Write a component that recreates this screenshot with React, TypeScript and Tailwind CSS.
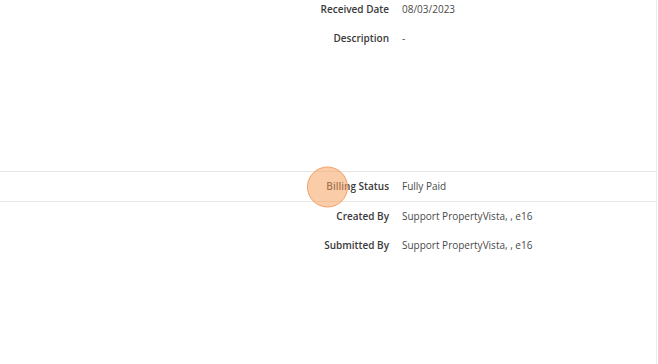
import React from 'react';

type Row = { label: string; value: string };

const top: Row[] = [
  { label: 'Received Date', value: '08/03/2023' },
  { label: 'Description', value: '-' },
];

const bottom: Row[] = [
  { label: 'Created By', value: 'Support PropertyVista, , e16' },
  { label: 'Submitted By', value: 'Support PropertyVista, , e16' },
];

const Field: React.FC<Row> = ({ label, value }) => (
  <div className="grid grid-cols-[389px_1fr] gap-x-[13px] items-center h-[29px]">
    <span className="text-right font-semibold text-[#3a3a3a]">{label}</span>
    <span className="text-[#4a4a4a]">{value}</span>
  </div>
);

const App: React.FC = () => {
  return (
    <div
      className="w-[658px] h-[364px] overflow-hidden bg-white text-[10px] flex"
      style={{ fontFamily: '"Open Sans", "Liberation Sans", sans-serif' }}
    >
      <div className="w-[656px] flex flex-col">
        {/* --- details --- */}
        <div className="mt-[-5px]">
          {top.map((r) => (
            <Field key={r.label} {...r} />
          ))}
        </div>

        {/* --- billing --- */}
        <div className="mt-[118px] border-y border-[#e6e6e6] h-[31px] grid grid-cols-[389px_1fr] gap-x-[13px] items-center">
          <span className="relative text-right font-semibold text-[#3a3a3a]">
            Billing Status
            <span className="absolute left-[307px] top-1/2 -translate-y-1/2 w-[41px] h-[41px] rounded-full bg-[#f7a361]/55 border-[1.5px] border-[#f3a066]" />
          </span>
          <span className="text-[#4a4a4a]">Fully Paid</span>
        </div>

        <div>
          {bottom.map((r) => (
            <Field key={r.label} {...r} />
          ))}
        </div>
      </div>
      <div className="w-[1px] h-full bg-[#ececec]" />
    </div>
  );
};

export default App;
